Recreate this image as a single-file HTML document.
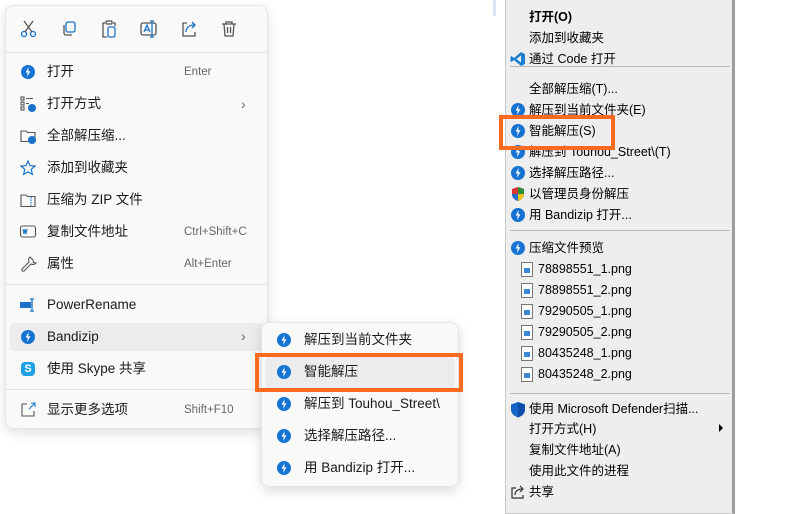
<!DOCTYPE html>
<html><head><meta charset="utf-8"><style>
*{margin:0;padding:0;box-sizing:border-box}
body{width:800px;height:507px;background:#fff;position:relative;overflow:hidden;font-family:"Liberation Sans","Noto Sans CJK SC",sans-serif;color:#1a1a1a}
.abs{position:absolute}
.lm{left:5px;top:5px;width:263px;height:424px;background:#f9f9f9;border:1px solid #e4e4e4;border-radius:8px;box-shadow:0 4px 12px rgba(0,0,0,.12)}
.it{position:absolute;font-size:13.5px;line-height:20px;white-space:nowrap}
.sc{position:absolute;font-size:11.5px;color:#666;line-height:20px}
.sep{position:absolute;height:1px;background:#e2e2e2}
.bz{position:absolute;width:14px;height:14px;border-radius:50%;background:#1673d4}
.bz::after{content:"";position:absolute;left:4px;top:2px;width:6px;height:10px;background:#fff;clip-path:polygon(60% 0,10% 55%,45% 55%,35% 100%,90% 42%,55% 42%)}
.sub{left:261px;top:322px;width:198px;height:165px;background:#f9f9f9;border:1px solid #e4e4e4;border-radius:8px;box-shadow:0 4px 12px rgba(0,0,0,.14)}
.rm{left:505px;top:-2px;width:230px;height:516px;background:#eeeeee;border:1px solid #c8c8c8;border-right:3px solid #9d9d9d}
.ri{position:absolute;font-size:12.5px;line-height:18px;left:529px;white-space:nowrap;color:#000}
.rsep{position:absolute;left:510px;width:220px;height:1px;background:#b8b8b8}
.png{position:absolute;left:521px;width:12px;height:15px;border:1px solid #777;background:#fff}
.png::after{content:"";position:absolute;left:2px;top:5px;width:6px;height:5px;background:#3b86d6}
.ob{position:absolute;border:4px solid #fc6a1f}
svg{position:absolute}
</style></head><body>
<div class="abs lm"></div>
<svg style="left:18px;top:18px" width="22" height="22" viewBox="0 0 22 22" fill="none" stroke="#1a73c8" stroke-width="1.3"><circle cx="6" cy="16" r="2.5"/><circle cx="15" cy="16" r="2.5"/><path d="M7 14L15 3M14 14L6 3" stroke="#555"/></svg>
<svg style="left:58px;top:18px" width="22" height="22" viewBox="0 0 22 22" fill="none" stroke-width="1.3"><rect x="8" y="4" width="9" height="10" rx="2" stroke="#1a73c8"/><path d="M6 7v8a2 2 0 0 0 2 2h6" stroke="#555"/></svg>
<svg style="left:98px;top:18px" width="22" height="22" viewBox="0 0 22 22" fill="none" stroke-width="1.3"><path d="M7 5H5v14h4M15 5h2v3" stroke="#555"/><rect x="8" y="3" width="6" height="3" rx="1" stroke="#555"/><rect x="10" y="9" width="7" height="10" rx="1.5" stroke="#1a73c8"/></svg>
<svg style="left:138px;top:18px" width="22" height="22" viewBox="0 0 22 22" fill="none" stroke-width="1.3"><rect x="3" y="5" width="15" height="12" rx="2" stroke="#555"/><path d="M6 14l3-7 3 7M7 12h4" stroke="#1a73c8"/><path d="M14 3v16M12 3h4M12 19h4" stroke="#1a73c8"/></svg>
<svg style="left:178px;top:18px" width="22" height="22" viewBox="0 0 22 22" fill="none" stroke-width="1.3"><path d="M9 5H5v13h12v-4" stroke="#555"/><path d="M8 14c0-5 4-7 9-7M14 4l3 3-3 3" stroke="#1a73c8"/></svg>
<svg style="left:218px;top:18px" width="22" height="22" viewBox="0 0 22 22" fill="none" stroke="#555" stroke-width="1.3"><path d="M4 6h14M8 6V4h6v2M6 6l1 12h8l1-12M9.5 9v6M12.5 9v6"/></svg>
<div class="sep" style="left:6px;top:52px;width:261px"></div>

<div class="bz" style="left:21px;top:65px"></div>
<div class="it" style="left:47px;top:62px">打开</div><div class="sc" style="left:184px;top:62px">Enter</div>
<svg style="left:19px;top:95px" width="18" height="18" viewBox="0 0 18 18" fill="none" stroke="#555" stroke-width="1.1"><rect x="2" y="2" width="3" height="3"/><rect x="2" y="7" width="3" height="3"/><rect x="2" y="12" width="3" height="3"/><path d="M7 3.5h7M7 8.5h3"/><circle cx="13" cy="13" r="4" fill="#1a73c8" stroke="none"/></svg>
<div class="it" style="left:47px;top:94px">打开方式</div><div class="sc" style="left:241px;top:94px;font-size:14px">›</div>
<svg style="left:19px;top:127px" width="18" height="18" viewBox="0 0 18 18" fill="none" stroke="#555" stroke-width="1.1"><path d="M2 4h5l1.5 1.5H16v9H2z"/><circle cx="13" cy="13" r="4" fill="#1a73c8" stroke="none"/></svg>
<div class="it" style="left:47px;top:126px">全部解压缩...</div>
<svg style="left:19px;top:159px" width="18" height="18" viewBox="0 0 18 18" fill="none" stroke="#1a73c8" stroke-width="1.2"><path d="M9 2l2 4.6 5 .5-3.8 3.3 1.2 5L9 12.8 4.6 15.4l1.2-5L2 7.1l5-.5z"/></svg>
<div class="it" style="left:47px;top:158px">添加到收藏夹</div>
<svg style="left:19px;top:191px" width="18" height="18" viewBox="0 0 18 18" fill="none" stroke="#555" stroke-width="1.1"><path d="M2 4h5l1.5 1.5H16v10H2z"/><path d="M12 6v9" stroke="#1a73c8" stroke-dasharray="1.5 1"/></svg>
<div class="it" style="left:47px;top:190px">压缩为 ZIP 文件</div>
<svg style="left:19px;top:223px" width="18" height="18" viewBox="0 0 18 18" fill="none" stroke="#555" stroke-width="1.1"><rect x="1.5" y="3" width="15" height="11" rx="2"/><path d="M4 6l1 5 1-5 1 5 1-5" stroke="#1a73c8"/></svg>
<div class="it" style="left:47px;top:222px">复制文件地址</div><div class="sc" style="left:184px;top:222px">Ctrl+Shift+C</div>
<svg style="left:19px;top:255px" width="18" height="18" viewBox="0 0 18 18" fill="none" stroke="#555" stroke-width="1.1"><path d="M11 2a4 4 0 0 0-1 5L3 14a1.5 1.5 0 0 0 2 2l7-7a4 4 0 0 0 5-1l-2.5-.5-.5-2.5z"/></svg>
<div class="it" style="left:47px;top:254px">属性</div><div class="sc" style="left:184px;top:254px">Alt+Enter</div>
<div class="sep" style="left:6px;top:284px;width:261px"></div>
<svg style="left:19px;top:296px" width="18" height="18" viewBox="0 0 18 18"><rect x="1" y="6" width="11" height="6" fill="#1a73c8"/><path d="M13 3v12M11 3h4M11 15h4" stroke="#1a73c8" stroke-width="1.3"/></svg>
<div class="it" style="left:47px;top:295px">PowerRename</div>
<div class="abs" style="left:10px;top:323px;width:253px;height:28px;background:#ececec;border-radius:4px"></div>
<div class="bz" style="left:21px;top:330px"></div>
<div class="it" style="left:47px;top:327px">Bandizip</div><div class="sc" style="left:241px;top:326px;font-size:14px">›</div>
<div class="abs" style="left:21px;top:362px;width:14px;height:14px;border-radius:4px;background:#1ea0e6;color:#fff;font-size:11px;font-weight:bold;text-align:center;line-height:14px">S</div>
<div class="it" style="left:47px;top:359px">使用 Skype 共享</div>
<div class="sep" style="left:6px;top:389px;width:261px"></div>
<svg style="left:19px;top:401px" width="18" height="18" viewBox="0 0 18 18" fill="none" stroke="#555" stroke-width="1.1"><path d="M8 3H3v12h12v-5"/><path d="M10 8l6-6M12 2h4v4" stroke="#1a73c8"/></svg>
<div class="it" style="left:47px;top:400px">显示更多选项</div><div class="sc" style="left:184px;top:400px">Shift+F10</div>

<div class="abs sub"></div>
<div class="abs" style="left:265px;top:357px;width:190px;height:31px;background:#ececec;border-radius:4px"></div>
<div class="bz" style="left:277px;top:333px"></div><div class="it" style="left:304px;top:330px">解压到当前文件夹</div>
<div class="bz" style="left:277px;top:365px"></div><div class="it" style="left:304px;top:362px">智能解压</div>
<div class="bz" style="left:277px;top:397px"></div><div class="it" style="left:304px;top:394px">解压到 Touhou_Street\</div>
<div class="bz" style="left:277px;top:429px"></div><div class="it" style="left:304px;top:426px">选择解压路径...</div>
<div class="bz" style="left:277px;top:461px"></div><div class="it" style="left:304px;top:458px">用 Bandizip 打开...</div>
<div class="ob" style="left:255px;top:353px;width:208px;height:39px"></div>

<div class="abs" style="left:493px;top:0;width:3px;height:16px;background:#d8e6f5"></div>
<div class="abs rm"></div>
<div class="ri" style="top:8px;font-weight:bold">打开(O)</div>
<div class="ri" style="top:29px">添加到收藏夹</div>
<svg style="left:510px;top:51px" width="16" height="16" viewBox="0 0 16 16"><path d="M11 1l4 2v10l-4 2L4 9 1.5 11 0.5 10V6l1-1L4 7z" fill="#1c7fd0"/><path d="M11 4.5v7L6.5 8z" fill="#eee"/></svg>
<div class="ri" style="top:50px">通过 Code 打开</div>
<div class="rsep" style="top:66px"></div>
<div class="ri" style="top:80px">全部解压缩(T)...</div>
<div class="bz" style="left:511px;top:103px"></div><div class="ri" style="top:101px">解压到当前文件夹(E)</div>
<div class="bz" style="left:511px;top:124px"></div><div class="ri" style="top:122px">智能解压(S)</div>
<div class="bz" style="left:511px;top:145px"></div><div class="ri" style="top:143px">解压到 Touhou_Street\(T)</div>
<div class="bz" style="left:511px;top:166px"></div><div class="ri" style="top:164px">选择解压路径...</div>
<svg style="left:510px;top:186px" width="16" height="16" viewBox="0 0 16 16"><path d="M8 1l6 2v5c0 4-3 6-6 7-3-1-6-3-6-7V3z" fill="#d33"/><path d="M8 1l6 2v5H8z" fill="#2a8f3a"/><path d="M2 8h6v7c-3-1-6-3-6-7z" fill="#1f6fd0"/><path d="M8 8h6c0 4-3 6-6 7z" fill="#f0c020"/></svg>
<div class="ri" style="top:185px">以管理员身份解压</div>
<div class="bz" style="left:511px;top:208px"></div><div class="ri" style="top:206px">用 Bandizip 打开...</div>
<div class="rsep" style="top:230px"></div>
<div class="bz" style="left:511px;top:241px"></div><div class="ri" style="top:239px">压缩文件预览</div>
<div class="png" style="top:262px"></div><div class="ri" style="left:538px;top:260px">78898551_1.png</div>
<div class="png" style="top:283px"></div><div class="ri" style="left:538px;top:281px">78898551_2.png</div>
<div class="png" style="top:304px"></div><div class="ri" style="left:538px;top:302px">79290505_1.png</div>
<div class="png" style="top:325px"></div><div class="ri" style="left:538px;top:323px">79290505_2.png</div>
<div class="png" style="top:346px"></div><div class="ri" style="left:538px;top:344px">80435248_1.png</div>
<div class="png" style="top:367px"></div><div class="ri" style="left:538px;top:365px">80435248_2.png</div>
<div class="rsep" style="top:393px"></div>
<svg style="left:510px;top:401px" width="16" height="17" viewBox="0 0 16 17"><path d="M8 1l7 2.5v5c0 4-3 6.5-7 8-4-1.5-7-4-7-8v-5z" fill="#1565c8"/><path d="M8 1l7 2.5v5c0 4-3 6.5-7 8z" fill="#0d4fa8"/></svg>
<div class="ri" style="top:400px">使用 Microsoft Defender扫描...</div>
<div class="ri" style="top:420px">打开方式(H)</div>
<div class="abs" style="left:719px;top:424px;width:0;height:0;border-top:4px solid transparent;border-bottom:4px solid transparent;border-left:4px solid #000"></div>
<div class="ri" style="top:441px">复制文件地址(A)</div>
<div class="ri" style="top:462px">使用此文件的进程</div>
<svg style="left:510px;top:484px" width="16" height="16" viewBox="0 0 16 16" fill="none" stroke="#333" stroke-width="1.2"><path d="M6 4H2v10h11v-3"/><path d="M5 11c0-4 3-6 8-6M10 2l3 3-3 3"/></svg>
<div class="ri" style="top:483px">共享</div>
<div class="ob" style="left:499px;top:115px;width:116px;height:35px"></div>
</body></html>
